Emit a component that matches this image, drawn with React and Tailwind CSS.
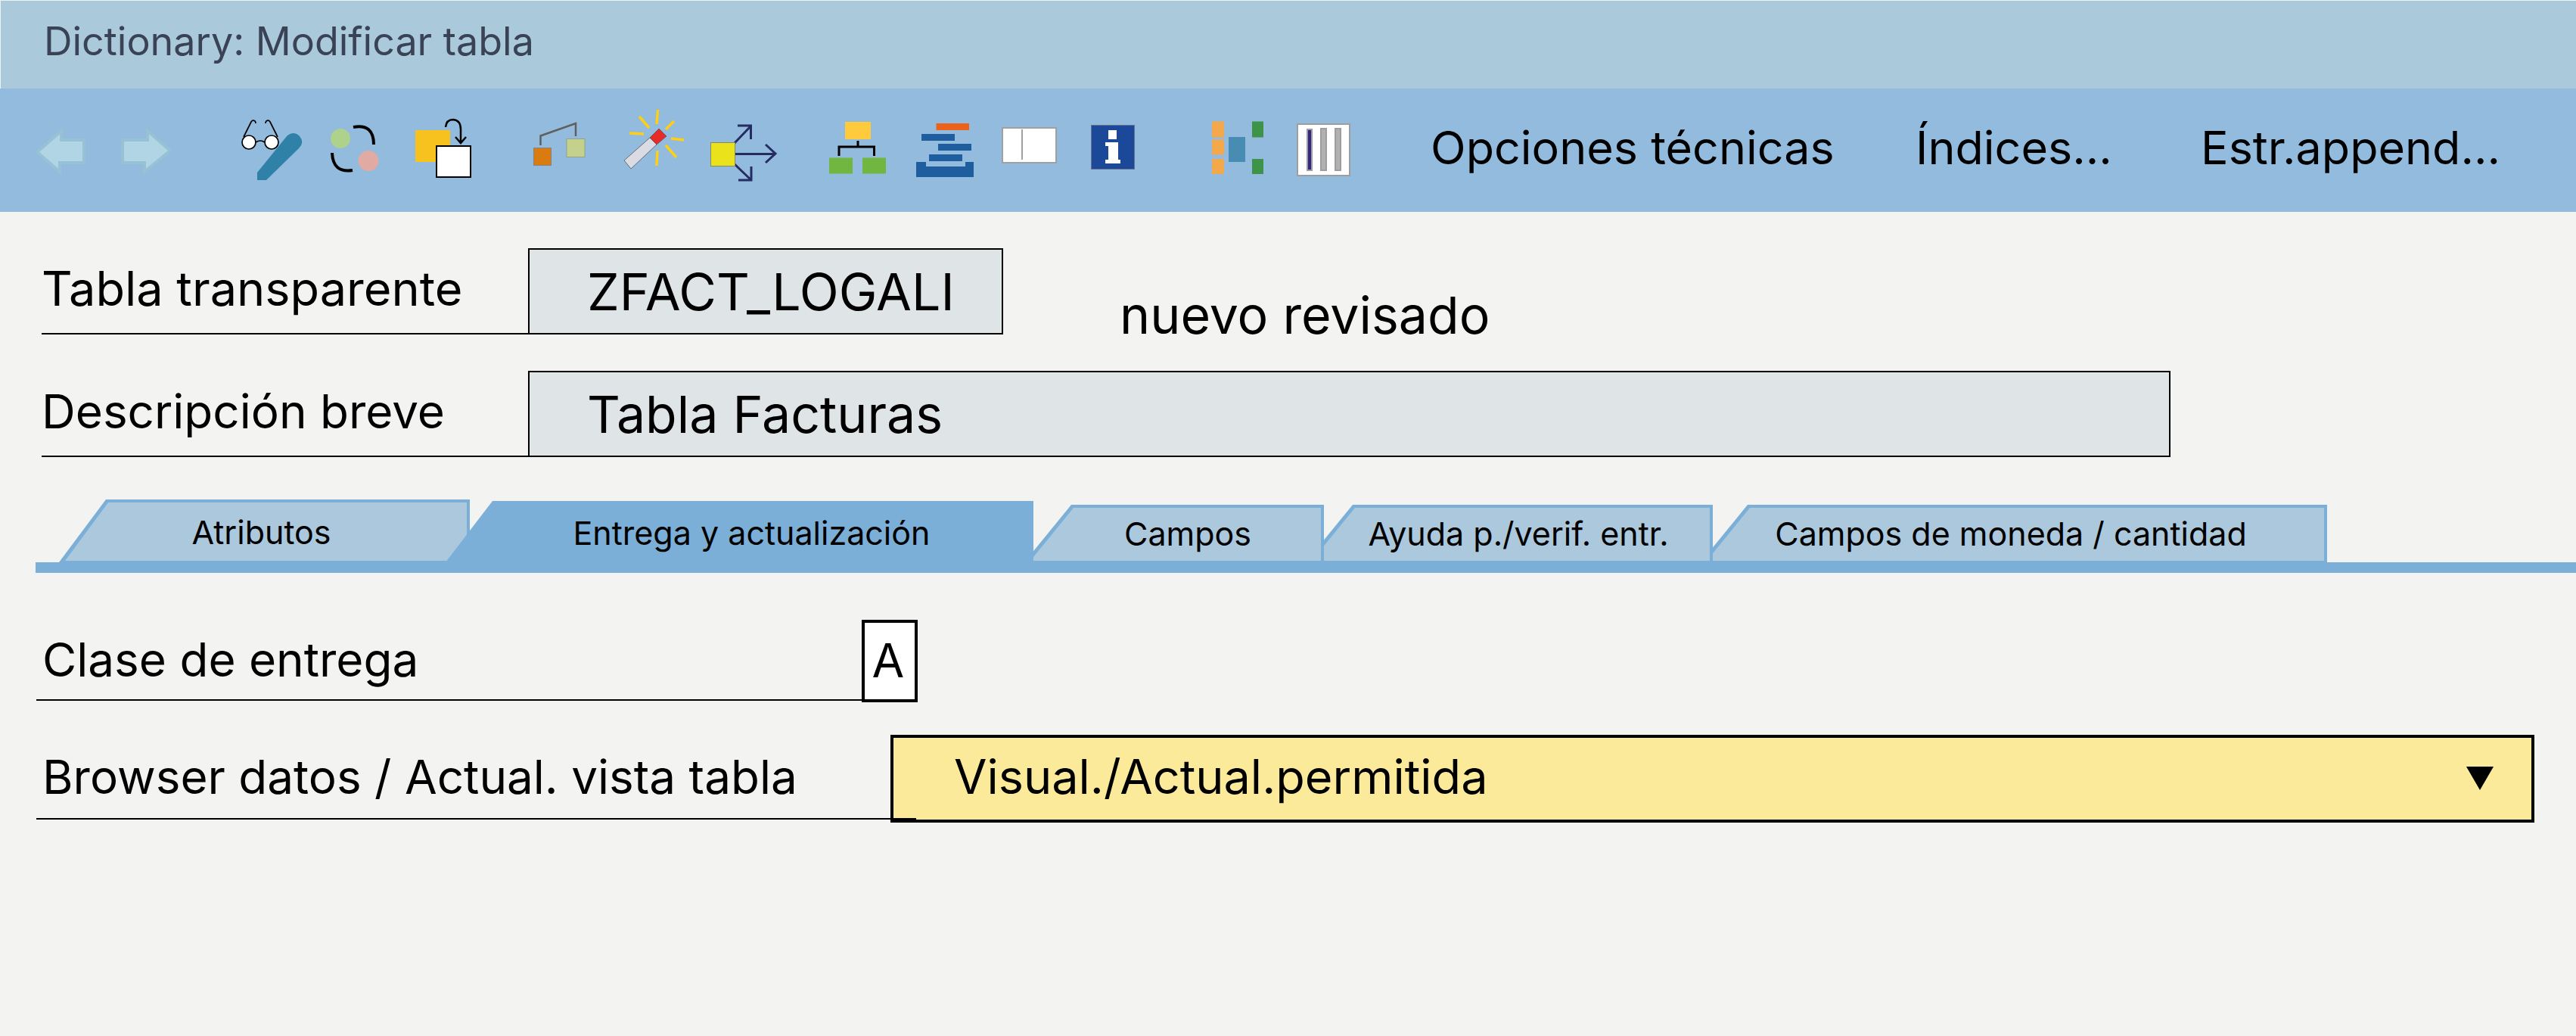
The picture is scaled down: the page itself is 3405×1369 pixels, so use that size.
import { useState } from "react";

const icons = {
  back: (
    <path d="M49 200 81 172V184H111V214H79V226Z" fill="#b1d5e5" stroke="#97c1d4" strokeWidth="4" />
  ),
  forward: (
    <path d="M225 198 195 172V184H162V214H191V226Z" fill="#b1d5e5" stroke="#97c1d4" strokeWidth="4" />
  ),
  display: (
    <g fill="none" stroke="#000" strokeWidth="1.7">
      <path
        d="M340 227 379 179Q388 171 396 179Q403 187 395 195L352 237H340Z"
        fill="#2f81a8"
        stroke="none"
      />
      <path d="M322 180 332 160Q334 157 337 159Q338 160 338 162M367 180 357 160Q355 157 352 159Q351 160 351 162M338 187Q344 183 350 187" />
      <circle cx="329" cy="187" r="9" fill="#fff" />
      <circle cx="359" cy="187" r="9" fill="#fff" />
    </g>
  ),
  toggle: (
    <>
      <circle cx="450" cy="182" r="13" fill="#aed18c" />
      <circle cx="487" cy="211.5" r="13.5" fill="#e1aaa3" />
      <path
        d="M467 167Q494 162 494 190M439 201Q440 228 466 224"
        fill="none"
        stroke="#000"
        strokeWidth="4"
      />
    </>
  ),
  copy: (
    <>
      <rect x="549" y="171" width="46" height="42" fill="#f8c21e" />
      <rect x="577" y="192" width="45" height="41" fill="#fff" stroke="#000" strokeWidth="2" />
      <path
        d="M589 167Q590 157 599 157Q609 158 609 170V187M602 180 609 188 616 180"
        fill="none"
        stroke="#000"
        strokeWidth="2.5"
      />
    </>
  ),
  check: (
    <>
      <path d="M714.5 191V178.5L761 162V179" fill="none" stroke="#5f5f5f" strokeWidth="2.5" />
      <rect x="705.5" y="194.5" width="23" height="23" fill="#da7b12" stroke="#85837a" />
      <rect x="749" y="182.5" width="24" height="24" fill="#c3d18c" stroke="#93a08a" />
    </>
  ),
  activate: (
    <>
      <path d="M825 211 859 181 868 190 834 222Z" fill="#dadbe3" stroke="#555" strokeWidth=".8" />
      <path d="M859 181 871 169 881 179 868 190Z" fill="#e72c28" stroke="#555" strokeWidth=".8" />
      <path
        d="M869.5 144 868 163M845 153 858 168M891 159 880 170M832 175 851 176M887 182 904 184M880 191 894 207M869 198 868 218"
        fill="none"
        stroke="#fecf14"
        strokeWidth="3.5"
      />
    </>
  ),
  whereUsed: (
    <>
      <path
        d="M971 188 992 166M975 165H992.5V183M971 202.5H1025M1012 190 1025 202 1012 214M971 216 993 237M976 237H993V219"
        fill="none"
        stroke="#262c62"
        strokeWidth="3"
      />
      <rect x="939.5" y="187.5" width="32" height="31" fill="#eae21a" stroke="#8a8960" />
    </>
  ),
  hierarchy: (
    <>
      <path d="M1134 185V193M1109 205V193H1155.5V205" fill="none" stroke="#000" strokeWidth="3" />
      <rect x="1117" y="160" width="34" height="23" fill="#ffca3c" />
      <rect x="1096" y="207.5" width="31" height="21" fill="#70b63f" />
      <rect x="1140" y="207.5" width="31" height="21" fill="#70b63f" />
    </>
  ),
  list: (
    <>
      <rect x="1237.5" y="162" width="43.5" height="9" fill="#ed621b" />
      <path
        d="M1218 176h44v9h-44ZM1240 189h44v9h-44ZM1228 203h44v9h-44ZM1211 213h13v6h52v-6h11v20h-76Z"
        fill="#1f5e9e"
      />
    </>
  ),
  window: (
    <>
      <rect x="1325" y="168" width="71" height="46" fill="#fff" stroke="#a0a0a0" strokeWidth="2" />
      <path d="M1351 170V210" stroke="#a0a0a0" strokeWidth="2" />
    </>
  ),
  info: (
    <>
      <rect x="1442.5" y="164.5" width="57" height="58" fill="#1b4899" stroke="#67708f" />
      <path d="M1465 171h11v12h-11ZM1461 187h17v23h3v5h-20v-5h4v-18h-4Z" fill="#fff" />
    </>
  ),
  graph: (
    <>
      <path d="M1602 159.5h16v21h-16ZM1602 183.5h16v20h-16ZM1602 209h16v20h-16Z" fill="#f4a84c" />
      <rect x="1624" y="180" width="22" height="33" fill="#498cb3" />
      <path d="M1655 159.5h15v21h-15ZM1655 209h15v20h-15Z" fill="#3d9348" />
    </>
  ),
  columns: (
    <>
      <rect x="1715" y="163" width="69" height="68" fill="#fff" stroke="#9e9e9e" strokeWidth="2" />
      <rect x="1728" y="170" width="6" height="54" fill="#342682" stroke="#9e9e9e" strokeWidth="2" />
      <rect x="1746" y="169" width="7" height="55" fill="#b1b1b1" stroke="#9e9e9e" strokeWidth="2" />
      <rect x="1765" y="169" width="7" height="55" fill="#b1b1b1" stroke="#9e9e9e" strokeWidth="2" />
    </>
  ),
};

const groups = [
  [
    { id: "back", label: "Atrás", box: "32 150 96 96" },
    { id: "forward", label: "Adelante", box: "144 150 96 96" },
  ],
  [
    { id: "display", label: "Visualizar / Modificar", box: "308 150 96 96" },
    { id: "toggle", label: "Activo / Inactivo", box: "420 150 96 96" },
    { id: "copy", label: "Otro objeto", box: "532 150 96 96" },
  ],
  [
    { id: "check", label: "Verificar", box: "696 150 96 96" },
    { id: "activate", label: "Activar", box: "808 150 96 96" },
    { id: "whereUsed", label: "Referencia de utilización", box: "920 150 96 96" },
  ],
  [
    { id: "hierarchy", label: "Jerarquía", box: "1084 150 96 96" },
    { id: "list", label: "Lista de objetos", box: "1196 150 96 96" },
    { id: "window", label: "Ventana", box: "1308 150 96 96" },
    { id: "info", label: "Información", box: "1420 150 96 96" },
  ],
  [
    { id: "graph", label: "Gráfico", box: "1584 150 96 96" },
    { id: "columns", label: "Contenido", box: "1696 150 96 96" },
  ],
];

const tabs = [
  { name: "Atributos", size: "z-0 h-[83px] w-[543px] pt-1 pr-2" },
  { name: "Entrega y actualización", size: "z-40 -ml-8 h-[81px] w-[777px] pt-1 pl-8" },
  { name: "Campos", size: "z-30 -ml-3 h-[76px] w-[396px] pl-9" },
  { name: "Ayuda p./verif. entr.", size: "z-20 -ml-6 h-[76px] w-[538px] pl-6" },
  { name: "Campos de moneda / cantidad", size: "z-10 -ml-4 h-[76px] w-[828px] pr-2" },
];

function Tab({ name, size, selected, onSelect }) {
  return (
    <button
      type="button"
      role="tab"
      aria-selected={selected}
      onClick={onSelect}
      className={`relative flex shrink-0 items-center justify-center bg-[#7bafd8] text-[43px] whitespace-nowrap [clip-path:polygon(62px_0,100%_0,100%_100%,0_100%)] ${size}`}
    >
      {!selected && (
        <span className="absolute top-1 right-1 bottom-0.5 left-2 bg-[#acc8dd] [clip-path:polygon(57px_0,100%_0,100%_100%,0_100%)]" />
      )}
      <span className="relative">{name}</span>
    </button>
  );
}

export default function App() {
  const [tab, setTab] = useState("Entrega y actualización");

  return (
    <div className="min-h-screen bg-[#f3f3f1] font-['Inter',sans-serif] text-black">
      <header className="flex h-[117px] items-center border-t border-l border-[#eef2f3] bg-[#aacadc] pb-2 pl-[57px]">
        <h1 className="text-[52px] text-[#3a4256]">Dictionary: Modificar tabla</h1>
      </header>

      <nav className="flex h-[163px] items-center bg-[#93bbde] pl-8">
        <div className="flex gap-[68px]">
          {groups.map((group) => (
            <div key={group[0].id} className="flex gap-4">
              {group.map(({ id, label, box }) => (
                <button key={id} type="button" aria-label={label} className="size-24">
                  <svg viewBox={box} className="size-24 overflow-visible">
                    {icons[id]}
                  </svg>
                </button>
              ))}
            </div>
          ))}
        </div>
        <div className="flex pb-1.5 pl-[99px] text-left text-[61px] whitespace-nowrap">
          <button type="button" className="min-w-[641px] text-left">Opciones técnicas</button>
          <button type="button" className="min-w-[377px] text-left">Índices...</button>
          <button type="button">Estr.append...</button>
        </div>
      </nav>

      <main className="pt-12">
        <form className="flex flex-col gap-12 pl-[55px]">
          <div className="flex">
            <label
              htmlFor="tabla"
              className="flex h-[114px] w-[643px] shrink-0 items-center border-b-2 border-black pb-1.5 text-[63px]"
            >
              Tabla transparente
            </label>
            <input
              id="tabla"
              readOnly
              defaultValue="ZFACT_LOGALI"
              className="h-[114px] w-[628px] border-2 border-black bg-[#dfe4e6] pl-[76px] text-[68px]"
            />
            <output htmlFor="tabla" className="ml-[154px] self-end text-[68px] leading-[52px]">
              nuevo revisado
            </output>
          </div>
          <div className="flex">
            <label
              htmlFor="descripcion"
              className="flex h-[114px] w-[643px] shrink-0 items-center border-b-2 border-black pb-1.5 text-[62px]"
            >
              Descripción breve
            </label>
            <input
              id="descripcion"
              defaultValue="Tabla Facturas"
              className="h-[114px] max-w-[2171px] flex-1 border-2 border-black bg-[#dfe4e6] pl-[76px] text-[68px]"
            />
          </div>
        </form>

        <div
          role="tablist"
          className="mt-14 ml-[47px] flex items-end border-b-14 border-[#7bafd8] pl-[31px]"
        >
          {tabs.map(({ name, size }) => (
            <Tab
              key={name}
              name={name}
              size={size}
              selected={name === tab}
              onSelect={() => setTab(name)}
            />
          ))}
        </div>

        <form className="mt-[62px] ml-12 flex flex-col gap-[43px]">
          <div className="flex">
            <label
              htmlFor="clase"
              className="flex h-[107px] w-[1091px] items-center border-b-2 border-black pl-2 text-[62px]"
            >
              Clase de entrega
            </label>
            <input
              id="clase"
              maxLength={1}
              defaultValue="A"
              className="h-[109px] w-[74px] border-4 border-black bg-white pr-1 pb-0.5 text-center text-[62px]"
            />
          </div>
          <div className="flex pr-[55px]">
            <label
              htmlFor="browser"
              className="relative z-10 flex h-[116px] w-[1129px] shrink-0 items-center pb-1.5 pl-2 text-[62px]"
            >
              Browser datos / Actual. vista tabla
              <span className="absolute -right-[34px] bottom-1 left-0 border-b-2 border-black" />
            </label>
            <div className="relative flex-1">
              <select
                id="browser"
                defaultValue="permitida"
                className="h-[116px] w-full appearance-none border-4 border-black bg-[#fcea9b] pb-1.5 pl-[80px] text-[63px]"
              >
                <option value="permitida">Visual./Actual.permitida</option>
              </select>
              <svg
                viewBox="0 0 36 31"
                className="pointer-events-none absolute top-[42px] right-[54px] h-[31px] w-9"
              >
                <path d="M0 0H36L18 31Z" />
              </svg>
            </div>
          </div>
        </form>
      </main>
    </div>
  );
}
